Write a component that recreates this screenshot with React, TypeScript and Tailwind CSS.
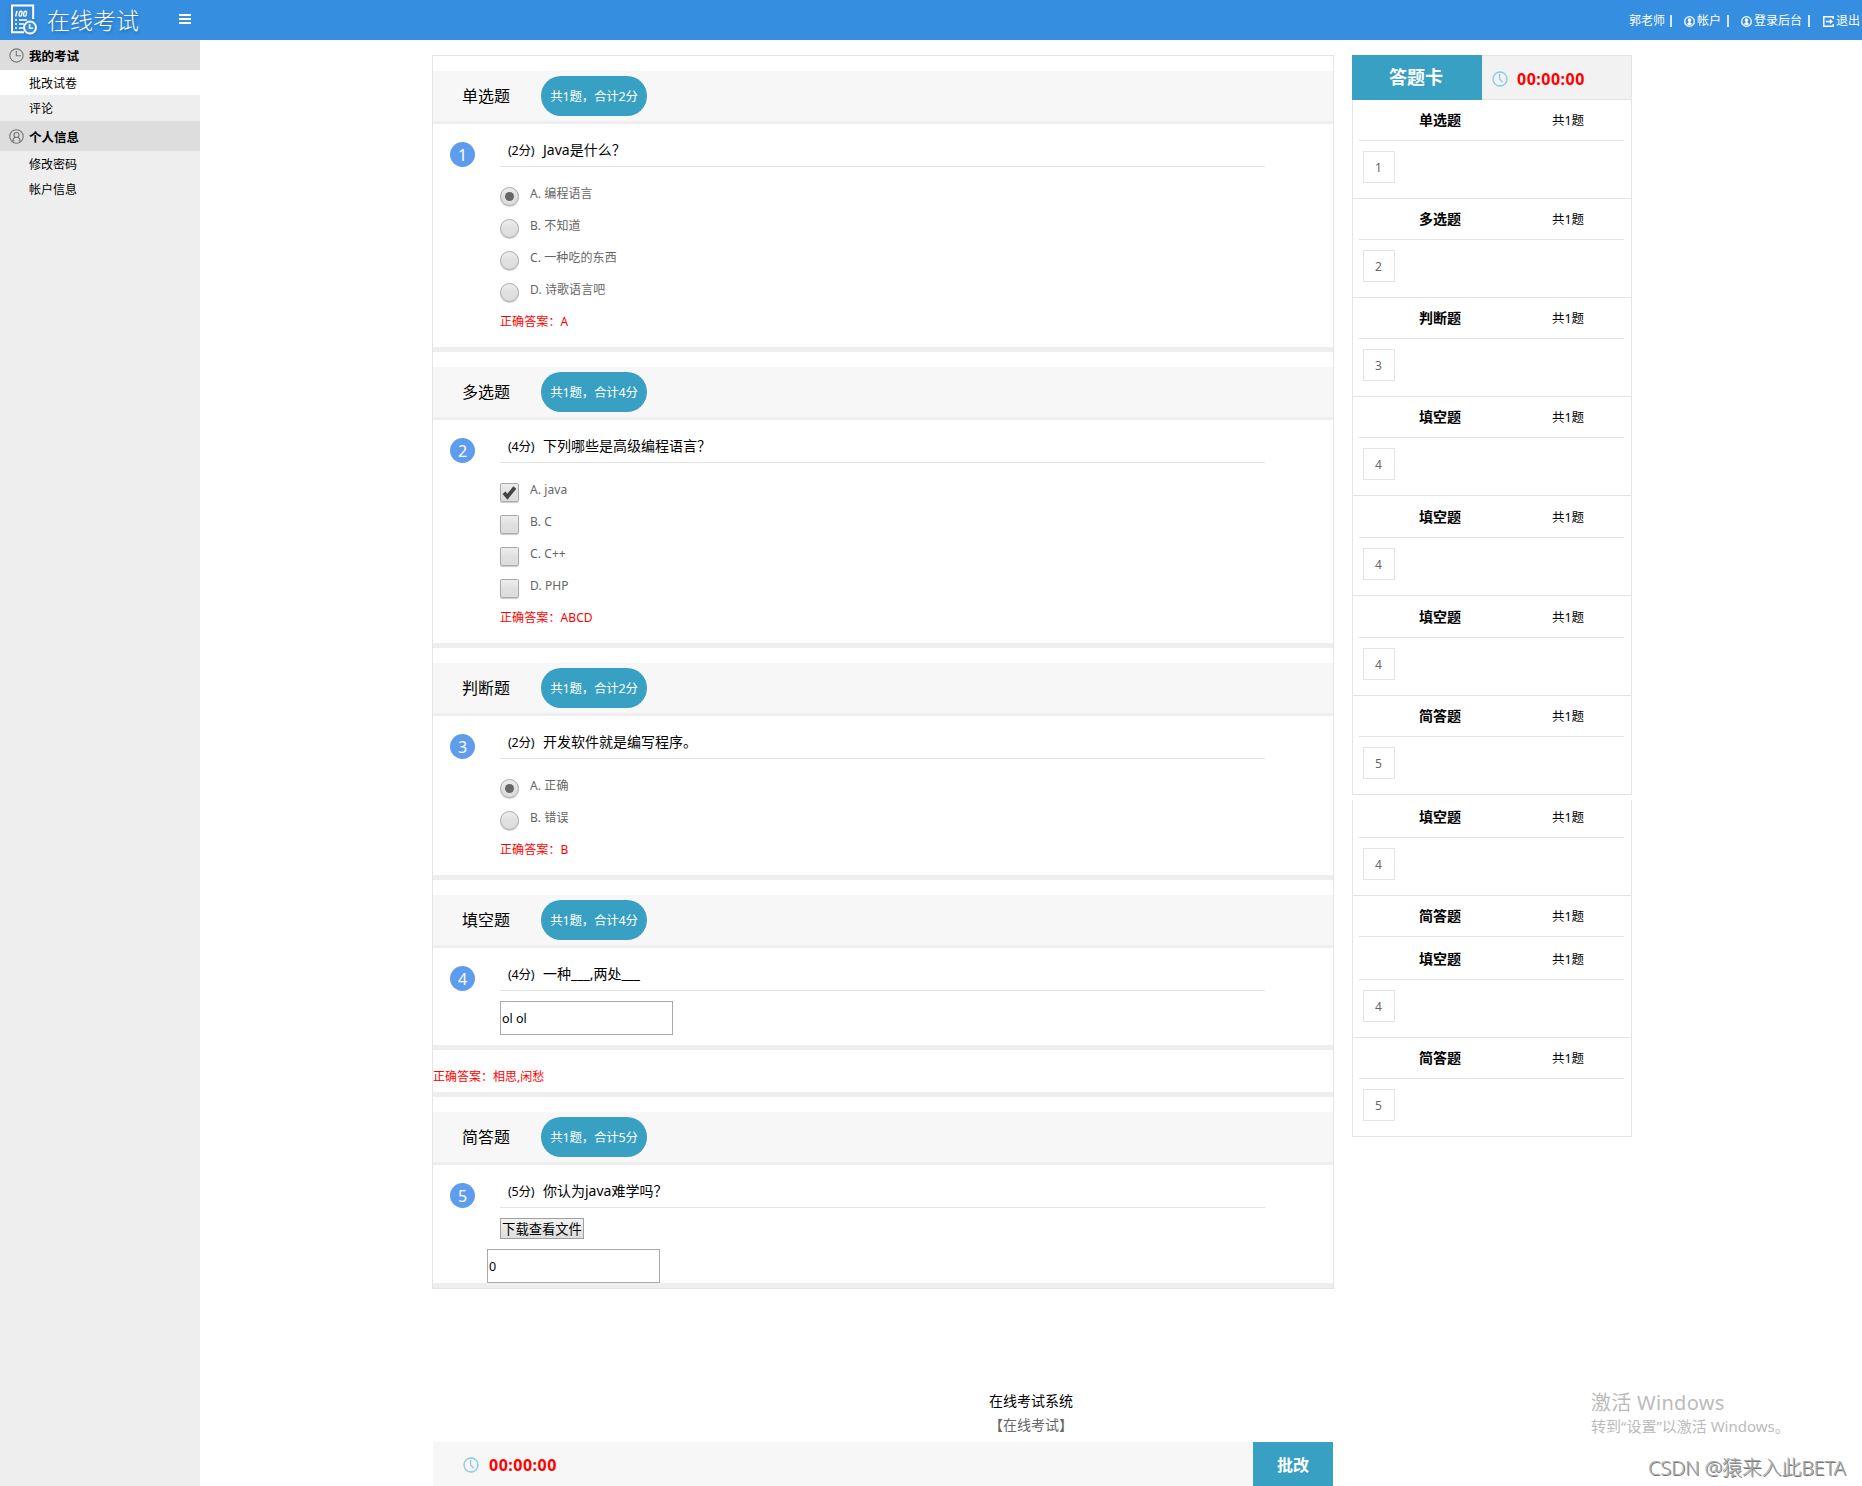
import type { ReactNode } from 'react';

type Option = { label: string; on?: boolean };
type Row = { name: string; no?: number; head?: string };

const single: Option[] = [{label:'A. 编程语言',on:true},{label:'B. 不知道'},{label:'C. 一种吃的东西'},{label:'D. 诗歌语言吧'}];
const multi: Option[] = [{label:'A. java',on:true},{label:'B. C'},{label:'C. C++'},{label:'D. PHP'}];
const judge: Option[] = [{label:'A. 正确',on:true},{label:'B. 错误'}];

const h40 = 'h-10 leading-[40px]';
const h41 = 'h-[41px] leading-[42px]';
const cards: Row[] = [
  {name:'单选题',no:1},{name:'多选题',no:2},{name:'判断题',no:3},{name:'填空题',no:4},
  {name:'填空题',no:4,head:h41},{name:'填空题',no:4,head:h41},{name:'简答题',no:5},
];
const moreCards: Row[] = [
  {name:'填空题',no:4,head:'h-[37px] leading-[34px]'},{name:'简答题'},
  {name:'填空题',no:4,head:'h-[42px] leading-[44px]'},{name:'简答题',no:5},
];

function LogoIcon(){
  return <svg width="28" height="32" viewBox="0 0 28 32" fill="none" stroke="#fff" className="drop-shadow-sm">
    <path d="M14 28.2H2V1.5h21.2V15" strokeWidth="2"/>
    <path d="M7 7l-1.4 5.500" strokeWidth="1.5"/>
    <rect x="9.3" y="7.3" width="2.6" height="4.8" rx="1.2" strokeWidth="1.4" transform="skewX(-8) translate(1.3 0)"/>
    <rect x="13.8" y="7.3" width="2.6" height="4.8" rx="1.2" strokeWidth="1.4" transform="skewX(-8) translate(1.3 0)"/>
    <path d="M5 16h2M9 16h8M5 20h2M9 20h5M5 24h2M9 24h4" strokeWidth="1.7"/>
    <circle cx="20" cy="23.6" r="6" strokeWidth="2" fill="#368ee0"/>
    <path d="M19.6 20.2v4h3.6" strokeWidth="1.6"/>
  </svg>;
}

function ClockIcon({color,size}:{color:string;size:number}){
  return <svg width={size} height={size} viewBox="0 0 16 16" fill="none" stroke={color} strokeWidth="1.2">
    <circle cx="8" cy="8" r="7.1"/><path d="M7.8 3v5.3h5"/>
  </svg>;
}

function TimerIcon(){
  return <svg width="16" height="16" viewBox="0 0 16 16" fill="none" stroke="#8ccae8" strokeWidth="1.3">
    <circle cx="8" cy="8" r="7"/><path d="M7.6 3v5l3 3.2"/>
    <path d="M8 .8v1.6M8 13.6v1.6M.8 8h1.6M13.6 8h1.6" strokeWidth=".8"/>
  </svg>;
}

function PersonIcon(){
  return <svg width="15" height="15" viewBox="0 0 16 16" fill="none" stroke="#777" strokeWidth="1.2">
    <circle cx="8" cy="8" r="7.2"/><circle cx="8" cy="6.4" r="2.7"/>
    <path d="M3.900 12.400c.3-2 1.300-3 2.600-3.600M12.100 12.400c-.3-2-1.300-3-2.600-3.600M3.400 13.200c1.200-.9 2-.6 2.400-.6M12.600 13.200c-1.200-.9-2-.6-2.400-.6"/>
  </svg>;
}

function UserBadge(){
  return <svg width="11" height="11" viewBox="0 0 11 11">
    <circle cx="5.5" cy="5.5" r="4.8" fill="none" stroke="#fff" strokeWidth="1.3"/>
    <path d="M5.5 2.2c1.1 0 1.7.8 1.7 1.8 0 .8-.3 1.3-.7 1.6V7l1.7.8C7.4 8.9 6.5 9.3 5.5 9.3S3.6 8.9 2.8 7.8L4.5 7V5.6c-.4-.3-.7-.8-.7-1.6 0-1 .6-1.8 1.7-1.8z" fill="#fff"/>
  </svg>;
}

function ExitIcon(){
  return <svg width="11" height="11" viewBox="0 0 11 11" fill="none" stroke="#fff">
    <path d="M10.2 3V.8H.8v9.4h9.4V8" strokeWidth="1.4"/>
    <path d="M2.8 5.5h5" strokeWidth="1.6"/><path d="M6.8 2.7l3.2 2.8-3.2 2.8z" fill="#fff" stroke="none"/>
  </svg>;
}

function SideHead({icon,children}:{icon:ReactNode;children:ReactNode}){
  return <div className="flex h-[30px] items-center bg-[#ddd] pl-[9px] text-[12.5px] font-bold">
    <span className="mt-px w-[21px]">{icon}</span><span className="-ml-px h-[30px] leading-[33px]">{children}</span>
  </div>;
}

function Radio({on}:{on?:boolean}){
  return <span className="flex size-[19px] shrink-0 items-center justify-center rounded-full border border-[#aaa] bg-linear-to-b from-[#eee] via-[#e0e0e0] to-[#ddd] shadow-[0_1px_1px_rgba(0,0,0,0.2)]">
    {on && <span className="size-[9px] rounded-full bg-[#666]"/>}
  </span>;
}

function Check({on}:{on?:boolean}){
  return <span className="flex size-[19px] shrink-0 items-center justify-center rounded-[2px] border border-[#aaa] bg-linear-to-b from-[#eee] via-[#e0e0e0] to-[#ddd] shadow-[0_1px_1px_rgba(0,0,0,0.2)]">
    {on && <svg width="15" height="15" viewBox="0 0 15 15"><path d="M2 7.800l3.400 3.900L12.800 2.500" fill="none" stroke="#444" strokeWidth="3.8"/></svg>}
  </span>;
}

function Section({title,pts}:{title:string;pts:number}){
  return <div className="mt-[15px] flex h-[53px] items-center border-b-[3px] border-[#eee] bg-[#f7f7f7] pl-[29px]">
    <h2 className="w-[79px] text-base leading-[50px]">{title}</h2>
    <span className="h-10 w-[106px] rounded-[20px] bg-[#38a0c3] text-center text-[12.5px] leading-[41px] tracking-[-0.2px] text-white">共1题，合计{pts}分</span>
  </div>;
}

function Question({no,pts,text,children}:{no:number;pts:number;text:string;children:ReactNode}){
  return <div className="flex border-b-[5px] border-[#eee] pl-[17px]">
    <span className="mt-[18px] size-[25px] shrink-0 rounded-full bg-[#5e9ced] text-center text-base leading-[26px] text-white">{no}</span>
    <div className="ml-[25px] w-[765px]">
      <div className="flex h-[43px] items-start border-b border-[#e4e4e4] pl-2 pt-[11px] text-sm leading-[30px]">
        <span className="w-[35px] whitespace-nowrap pt-px text-[12.5px] leading-[30px] tracking-[-0.2px]">({pts}分)</span>
        <span className="whitespace-nowrap">{text}</span>
      </div>
      {children}
    </div>
  </div>;
}

function Choices({items,multiple,answer}:{items:Option[];multiple?:boolean;answer:string}){
  return <div className="pt-[14px]">
    {items.map(o=><label key={o.label} className="flex h-8 items-start pt-[6px]">
      {multiple?<Check on={o.on}/>:<Radio on={o.on}/>}
      <span className="-mt-[3px] ml-[11px] text-xs leading-[20px] tracking-[0.1px] text-[#666]">{o.label}</span>
    </label>)}
    <p className="h-[38px] text-[12px] leading-[26px] tracking-[0.1px] text-[#f00]">正确答案：{answer}</p>
  </div>;
}

function Card({name,no,head}:Row){
  return <div className={no?'border-b border-[#e4e4e4]':''}>
    <div className={`ml-[6px] box-content flex w-[265px] border-b border-[#e4e4e4] ${head||h40}`}>
      <b className="ml-[60px] w-[133px] text-sm leading-[inherit]">{name}</b>
      <span className="pt-px text-[12.5px] leading-[inherit] tracking-[-0.1px]">共1题</span>
    </div>
    {no && <div className="mb-[15px] ml-[10px] mt-[10px] size-8 border border-[#e4e4e4] pr-px text-center text-xs leading-[32px] text-[#666]">{no}</div>}
  </div>;
}

function Field({value,className}:{value:string;className?:string}){
  return <input defaultValue={value} className={`block h-[34px] w-[173px] border border-[#a9a9a9] px-px text-[12.5px] outline-none ${className||''}`}/>;
}

export default function App(){
  return <div className="flex h-[1486px] w-[1862px] flex-col overflow-hidden bg-white font-['Noto_Sans','Noto_Sans_CJK_SC',sans-serif] text-black">
    <header className="flex h-10 shrink-0 items-center bg-[#368ee0] text-white">
      <span className="ml-[10px]"><LogoIcon/></span>
      <h1 className="ml-[9px] w-[132px] whitespace-nowrap text-[23px] font-light leading-[38px] [text-shadow:1px_2px_3px_rgba(0,0,0,0.25)]">在线考试</h1>
      <span className="-mt-[2px] flex w-3 flex-col gap-[2px]"><i className="h-[2px] bg-white"/><i className="h-[2px] bg-white"/><i className="h-[2px] bg-white"/></span>
      <nav className="ml-auto mr-[2px] flex items-center whitespace-nowrap pt-[2px] text-xs leading-[40px]">
        <span>郭老师</span><i className="ml-[5px] mr-3 h-3 w-[2px] bg-white/80"/>
        <UserBadge/><span className="ml-[2px]">帐户</span><i className="ml-[6px] mr-3 h-3 w-[2px] bg-white/80"/>
        <UserBadge/><span className="ml-[2px]">登录后台</span><i className="ml-[6px] mr-[13px] h-3 w-[2px] bg-white/80"/>
        <ExitIcon/><span className="ml-[2px]">退出</span>
      </nav>
    </header>

    <div className="flex min-h-0 flex-1">
      <aside className="w-[200px] shrink-0 bg-[#eee] text-xs">
        <SideHead icon={<ClockIcon color="#777" size={15}/>}>我的考试</SideHead>
        <a className="block h-[25px] bg-white pl-[29px] leading-[28px]">批改试卷</a>
        <a className="block h-[26px] pl-[29px] leading-[28px]">评论</a>
        <SideHead icon={<PersonIcon/>}>个人信息</SideHead>
        <a className="block h-[25px] pl-[29px] leading-[28px]">修改密码</a>
        <a className="block h-[25px] pl-[29px] leading-[28px]">帐户信息</a>
      </aside>

      <div className="flex flex-1 flex-col">
        <div className="ml-[232px] mt-[15px] flex items-start">
          <main className="w-[902px] border border-[#e4e4e4]">
            <Section title="单选题" pts={2}/>
            <Question no={1} pts={2} text="Java是什么？"><Choices items={single} answer="A"/></Question>
            <Section title="多选题" pts={4}/>
            <Question no={2} pts={4} text="下列哪些是高级编程语言？"><Choices items={multi} multiple answer="ABCD"/></Question>
            <Section title="判断题" pts={2}/>
            <Question no={3} pts={2} text="开发软件就是编写程序。"><Choices items={judge} answer="B"/></Question>
            <Section title="填空题" pts={4}/>
            <Question no={4} pts={4} text="一种___,两处___"><Field value="ol ol" className="mb-[10px] mt-[10px]"/></Question>
            <p className="h-[47px] border-b-[5px] border-[#eee] pt-[12px] text-[12px] leading-[30px] text-[#f00]">正确答案：相思,闲愁</p>
            <Section title="简答题" pts={5}/>
            <Question no={5} pts={5} text="你认为java难学吗？">
              <button className="mt-[10px] block h-[21px] w-[84px] whitespace-nowrap border border-[#a0a0a0] bg-linear-to-b from-[#f4f4f4] to-[#ddd] text-[13.3px] leading-[20px]">下载查看文件</button>
              <Field value="0" className="-ml-[13px] mt-[10px]"/>
            </Question>
          </main>

          <section className="ml-[18px] w-[280px]">
            <div className="flex h-[45px] items-center border border-l-0 border-[#e4e4e4] bg-[#f2f2f2]">
              <h2 className="-my-px h-[45px] w-[130px] bg-[#38a0c3] pr-[2px] text-center text-lg font-bold leading-[45px] text-white">答题卡</h2>
              <span className="ml-[10px] mt-[3px]"><TimerIcon/></span>
              <b className="ml-[9px] mt-[3px] text-base tracking-[0.5px] text-[#f00]">00:00:00</b>
            </div>
            <div className="border-x border-[#e4e4e4]">{cards.map((c,i)=><Card key={i} {...c}/>)}</div>
            <div className="mt-[5px] border-x border-[#e4e4e4]">{moreCards.map((c,i)=><Card key={i} {...c}/>)}</div>
          </section>
        </div>

        <footer className="mt-[100px] text-center text-sm leading-[24px]">
          <p>在线考试系统</p>
          <p className="text-[#666]">【在线考试】</p>
        </footer>

        <div className="ml-[233px] mt-auto flex h-[44px] w-[900px] shrink-0 items-center bg-[#f7f7f7]">
          <span className="ml-[30px] mt-[2px]"><TimerIcon/></span>
          <b className="ml-[10px] mt-[2px] text-base tracking-[0.5px] text-[#f00]">00:00:00</b>
          <button className="ml-auto h-[44px] w-20 bg-[#38a0c3] text-base font-bold leading-[46px] text-white">批改</button>
        </div>
      </div>
    </div>

    <div className="absolute left-[1591px] top-[1388px] whitespace-nowrap text-[#bbb]">
      <p className="text-xl leading-[30px] tracking-[0.3px]">激活 Windows</p>
      <p className="text-[15px] leading-[17px]">转到“设置”以激活 Windows。</p>
    </div>
    <div className="absolute left-[1648px] top-[1453px] whitespace-nowrap text-xl font-light leading-[30px] tracking-[-0.2px] text-[#aaa] [text-shadow:1px_1px_0_#777]">CSDN @猿来入此BETA</div>
  </div>;
}
